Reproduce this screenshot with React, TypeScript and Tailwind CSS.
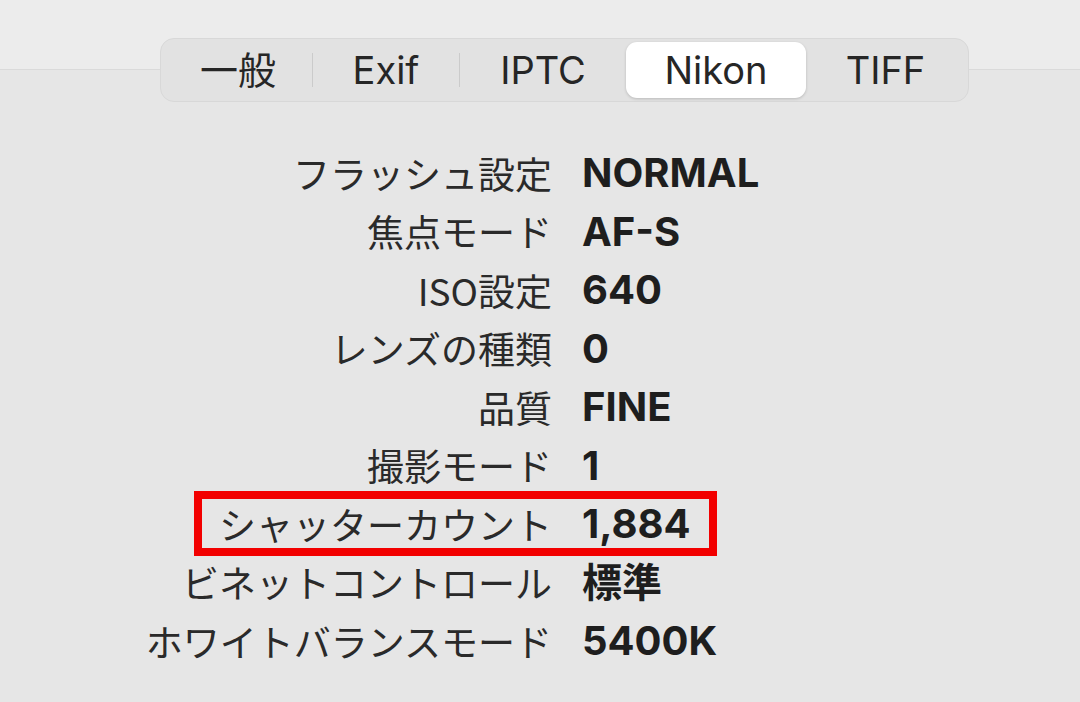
import React from 'react';

const tabs = [
  { label: '一般', w: 'w-[148px]' },
  { label: 'Exif', w: 'w-[146px]' },
  { label: 'IPTC', w: 'w-[166px]' },
  { label: 'Nikon', w: 'w-[180px]' },
  { label: 'TIFF', w: 'w-[159px]' },
];

const rows: [string, string][] = [
  ['フラッシュ設定', 'NORMAL'],
  ['焦点モード', 'AF-S'],
  ['ISO設定', '640'],
  ['レンズの種類', '0'],
  ['品質', 'FINE'],
  ['撮影モード', '1'],
  ['シャッターカウント', '1,884'],
  ['ビネットコントロール', '標準'],
  ['ホワイトバランスモード', '5400K'],
];

const SELECTED = 3;

export default function App() {
  return (
    <div className="w-[1080px] h-[702px] overflow-hidden bg-[#e6e6e6] text-[#222]">
      <div className="h-[70px] bg-[#ececec] border-b border-[#dadada]" />

      {/* segmented control */}
      <div className="-mt-[32px] pl-[160px] flex">
        <div className="flex items-center p-[3px] h-[64px] rounded-[14px] bg-[#e2e2e2] border border-[#d8d8d8] font-['Inter','Noto_Sans_CJK_JP',sans-serif] text-[38px] text-[#262626]">
          {tabs.map((t, i) => {
            const showDivider = i > 0 && i !== SELECTED && i !== SELECTED + 1;
            return (
              <div key={t.label} className="flex items-center h-full">
                {showDivider && <div className="w-px h-[34px] bg-[#cbcbcb]" />}
                <div
                  className={`${t.w} h-full flex items-center justify-center ${
                    i === SELECTED ? 'bg-white rounded-[11px] shadow-[0_1px_3px_rgba(0,0,0,0.18)]' : ''
                  }`}
                >
                  {t.label}
                </div>
              </div>
            );
          })}
        </div>
      </div>

      {/* metadata list */}
      <div className="relative mt-[42px]">
        <div className="grid grid-cols-[552px_1fr] gap-x-[30px]">
          {rows.map(([k, v]) => (
            <React.Fragment key={k}>
              <div className="h-[58.5px] flex items-center justify-end font-['Noto_Sans_CJK_JP',sans-serif] text-[37px] text-[#2a2a2a] whitespace-nowrap">
                {k}
              </div>
              <div className="h-[58.5px] flex items-center font-['Inter','Noto_Sans_CJK_JP',sans-serif] font-bold text-[40px] text-[#1e1e1e] whitespace-nowrap">
                {v}
              </div>
            </React.Fragment>
          ))}
        </div>
        <div className="absolute left-[194px] top-[347px] w-[523px] h-[65px] border-[8px] border-[#f20000] pointer-events-none" />
      </div>
    </div>
  );
}
